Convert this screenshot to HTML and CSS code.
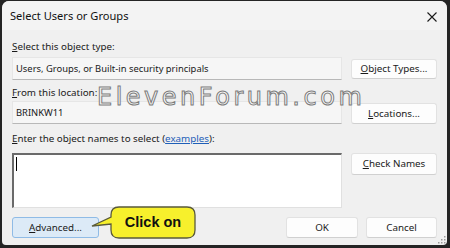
FILE: index.html
```html
<!DOCTYPE html>
<html>
<head>
<meta charset="utf-8">
<link rel="stylesheet" href="styles.css">
</head>
<body>
<div class="window">
  <div class="titlebar">
    <span class="title">Select Users or Groups</span>
    <svg class="close" width="10" height="10" viewBox="0 0 10 10"><path d="M0.5 0.5 L9.5 9.5 M9.5 0.5 L0.5 9.5" stroke="#1a1a1a" stroke-width="1.1" fill="none"/></svg>
  </div>
  <div class="content">
    <div class="label l1"><u>S</u>elect this object type:</div>
    <div class="row r1">
      <div class="field">Users, Groups, or Built-in security principals</div>
      <div class="btn side"><u>O</u>bject Types...</div>
    </div>
    <div class="label l2"><u>F</u>rom this location:</div>
    <div class="row r2">
      <div class="field">BRINKW11</div>
      <div class="btn side"><u>L</u>ocations...</div>
    </div>
    <div class="label l3"><u>E</u>nter the object names to select (<span class="link">examples</span>):</div>
    <div class="row r3">
      <div class="names"><span class="caret"></span></div>
      <div class="btn side check"><u>C</u>heck Names</div>
    </div>
    <div class="footer">
      <div class="btn adv"><u>A</u>dvanced...</div>
      <div class="spacer"></div>
      <div class="btn ok">OK</div>
      <div class="btn cancel">Cancel</div>
    </div>
  </div>
  <div class="watermark">ElevenForum.com</div>
  <div class="callout">
    <svg width="112" height="36" viewBox="0 0 112 36"><path d="M31 2 H99 Q107 2 107 10 V25 Q107 33 99 33 H31 Q23 33 23 25 V19 L4 21 L23 12 V10 Q23 2 31 2 Z" fill="#f7f02c" stroke="#5a5a3a" stroke-width="1.3"/></svg>
    <span class="ctext">Click on</span>
  </div>
  <svg class="grip" width="8" height="8" viewBox="0 0 8 8"><g fill="#9a9a9a"><rect x="6" y="0" width="1.5" height="1.5"/><rect x="3" y="3" width="1.5" height="1.5"/><rect x="6" y="3" width="1.5" height="1.5"/><rect x="0" y="6" width="1.5" height="1.5"/><rect x="3" y="6" width="1.5" height="1.5"/><rect x="6" y="6" width="1.5" height="1.5"/></g></svg>
</div>
</body>
</html>
```

FILE: styles.css
```css
html, body {
  margin: 0;
  padding: 0;
}
body {
  width: 450px;
  height: 248px;
  overflow: hidden;
  background: #242424;
  font-family: "Noto Sans", "Liberation Sans", sans-serif;
  font-size: 9.8px;
  color: #1a1a1a;
}
.window {
  position: relative;
  margin: 1px 3px 0 2px;
  height: 244px;
  background: #f0f0f0;
  border-radius: 7px 7px 4px 4px;
  display: flex;
  flex-direction: column;
  overflow: hidden;
}
.titlebar {
  height: 29px;
  background: #f3f3f3;
  display: flex;
  align-items: center;
  justify-content: space-between;
  padding: 0 10px 0 8px;
}
.title {
  font-size: 11.1px;
  color: #111;
}
.close {
  margin-top: 2px;
}
.content {
  display: flex;
  flex-direction: column;
  padding: 0 10px;
}
.label {
  height: 14px;
  line-height: 14px;
  white-space: nowrap;
}
.l1 { margin-top: 10px; }
.l2 { margin-top: 6px; }
.l3 { margin-top: 8px; }
.row {
  display: flex;
  gap: 9px;
  align-items: flex-start;
}
.r1 { margin-top: 3px; }
.r2 { margin-top: 1px; }
.r3 { margin-top: 7px; }
.field {
  width: 330px;
  height: 23px;
  box-sizing: border-box;
  background: #f6f6f6;
  border: 1px solid #e6e6e6;
  border-bottom: 1px solid #b8b8b8;
  line-height: 21px;
  padding-left: 3px;
  white-space: nowrap;
  font-size: 9.4px;
}
.btn {
  box-sizing: border-box;
  height: 20px;
  line-height: 18px;
  background: #fdfdfd;
  border: 1px solid #e2e2e2;
  border-bottom-color: #d0d0d0;
  border-radius: 3px;
  text-align: center;
  white-space: nowrap;
}
.side {
  width: 86px;
  margin-top: 2px;
}
.r2 .side { height: 21px; line-height: 19px; }
.check {
  margin-top: 0;
  height: 22px;
  line-height: 20px;
}
.names {
  width: 330px;
  height: 55px;
  box-sizing: border-box;
  background: #fff;
  border: 1px solid #e0e0e0;
  border-top: 2px solid #6a6a6a;
  border-left: 2px solid #6a6a6a;
}
.caret {
  display: block;
  width: 1px;
  height: 14px;
  background: #000;
  margin: 2px 0 0 2px;
}
.link {
  color: #1f5fb8;
  text-decoration: underline;
}
.footer {
  display: flex;
  margin-top: 9px;
  gap: 8px;
}
.footer .btn {
  height: 21px;
  line-height: 19px;
}
.spacer { flex: 1; }
.adv {
  width: 87px;
  background: #dceaf7;
  border-color: #8fbbe6;
}
.ok { width: 72px; }
.cancel { width: 71px; }
.watermark {
  position: absolute;
  left: 95px;
  top: 89px;
  height: 14px;
  line-height: 14px;
  font-family: "DejaVu Sans", sans-serif;
  font-size: 24px;
  letter-spacing: 3.5px;
  color: rgba(255, 255, 255, 0.85);
  -webkit-text-stroke: 1px #7c7c7c;
  white-space: nowrap;
}
.callout {
  position: absolute;
  left: 86px;
  top: 204px;
  width: 112px;
  height: 36px;
}
.callout svg {
  position: absolute;
  left: 0;
  top: 0;
}
.ctext {
  position: absolute;
  left: 23px;
  top: 2px;
  width: 84px;
  height: 31px;
  line-height: 31px;
  text-align: center;
  font-family: "Liberation Sans", sans-serif;
  font-weight: bold;
  font-size: 14.5px;
  color: #111;
}
.grip {
  position: absolute;
  right: 1px;
  bottom: 1px;
}
```
